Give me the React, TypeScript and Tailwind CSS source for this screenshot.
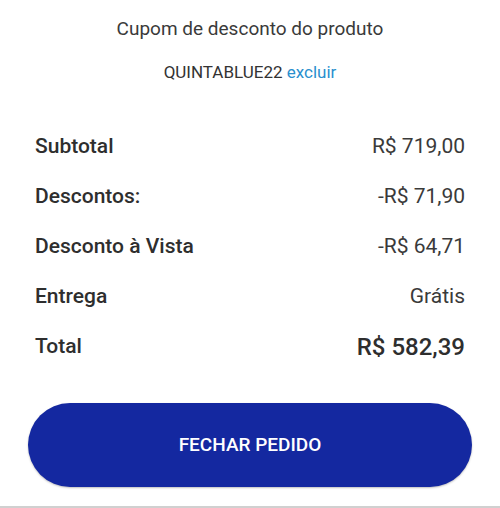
const rows = [
  { label: 'Subtotal', value: 'R$ 719,00' },
  { label: 'Descontos:', value: '-R$ 71,90' },
  { label: 'Desconto à Vista', value: '-R$ 64,71' },
  { label: 'Entrega', value: 'Grátis' },
];

export default function App() {
  return (
    <div
      className="flex h-[508px] w-[500px] flex-col bg-white text-[#333]"
      style={{ fontFamily: 'Roboto, "Noto Sans", sans-serif' }}
    >
      <div className="flex flex-col items-center pt-[16px]">
        <p className="text-[19px] leading-[26px] text-[#3a3a3a]">Cupom de desconto do produto</p>
        <p className="mt-[20px] text-[17px] leading-[20px] text-[#333]">
          QUINTABLUE22 <span className="text-[#2a8fce]">excluir</span>
        </p>
      </div>

      <div className="mt-[40px] flex flex-col px-[35px]">
        {rows.map((r) => (
          <div key={r.label} className="flex h-[50px] items-center justify-between">
            <span className="text-[21px] font-medium text-[#2e2e2e]">{r.label}</span>
            <span className="text-[21px] text-[#3a3a3a]">{r.value}</span>
          </div>
        ))}
        <div className="flex h-[50px] items-center justify-between">
          <span className="text-[21px] font-medium text-[#2e2e2e]">Total</span>
          <span className="text-[24px] font-medium text-[#2e2e2e]">R$ 582,39</span>
        </div>
      </div>

      <div className="mt-[31px] px-[28px]">
        <button className="flex h-[84px] w-full items-center justify-center rounded-full bg-[#1428a0] text-[19px] font-medium text-white shadow-[0_1px_2px_rgba(0,0,0,0.25)]">
          FECHAR PEDIDO
        </button>
      </div>

      <div className="mt-auto h-[2px] bg-[#d0d0d0]" />
    </div>
  );
}
